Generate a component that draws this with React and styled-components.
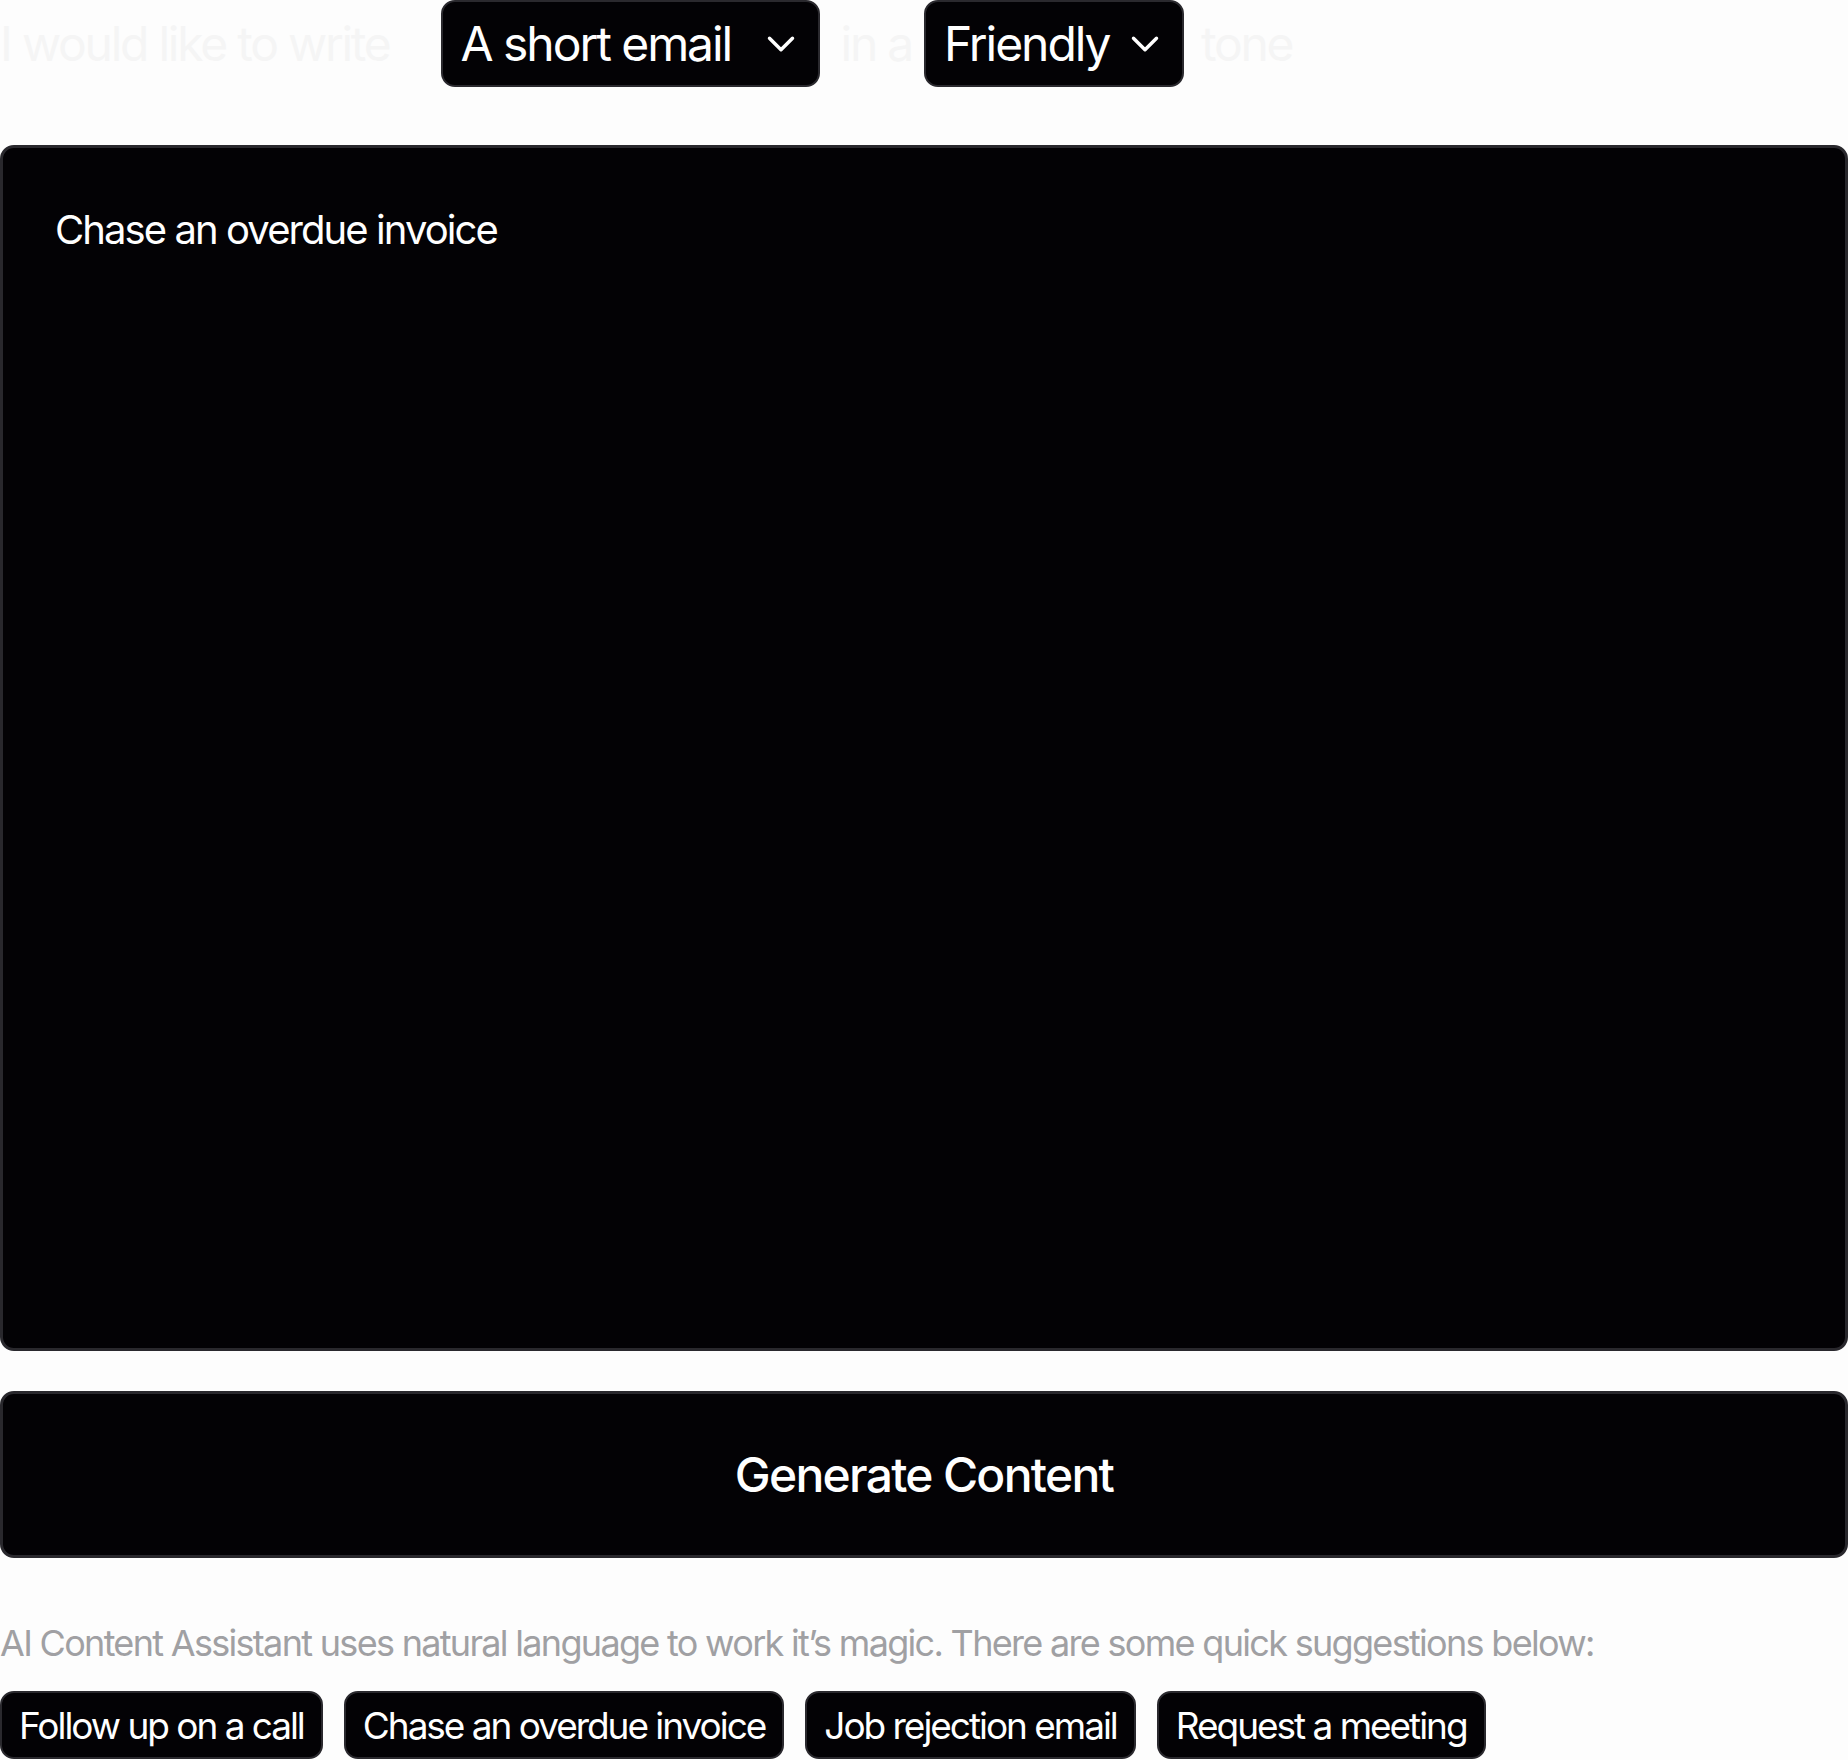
import React from "react";
import styled, { createGlobalStyle } from "styled-components";
import { ChevronDown } from "lucide-react";

const GlobalStyle = createGlobalStyle`
  html, body {
    margin: 0;
    padding: 0;
    background: #fdfdfd;
    font-family: Inter, "Liberation Sans", sans-serif;
  }
  * {
    box-sizing: border-box;
  }
`;

const Page = styled.div`
  width: 1848px;
  display: flex;
  flex-direction: column;
`;

const Sentence = styled.div`
  display: flex;
  align-items: center;
  height: 87px;
`;

const Filler = styled.span`
  font-size: 48px;
  color: #f5f5f5;
  letter-spacing: -0.047em;
  margin-right: ${(p) => p.$after || 0}px;
  margin-left: ${(p) => p.$before || 0}px;
`;

const Picker = styled.button`
  display: flex;
  align-items: center;
  justify-content: space-between;
  width: ${(p) => p.$w}px;
  height: 87px;
  padding: 0 14px 0 18px;
  background: #030205;
  border: 2px solid #2a292e;
  border-radius: 14px;
  color: #fff;
  font-family: inherit;
  font-size: 48px;
  letter-spacing: -0.043em;
  cursor: pointer;

  svg {
    flex-shrink: 0;
  }
`;

const Prompt = styled.textarea`
  margin-top: 58px;
  width: 100%;
  height: 1206px;
  resize: none;
  padding: 52px 52px;
  background: #030205;
  border: 3px solid #29282d;
  border-radius: 14px;
  color: #fff;
  font-family: inherit;
  font-size: 40px;
  line-height: 1.5;
  letter-spacing: -0.048em;
  outline: none;
`;

const Generate = styled.button`
  margin-top: 40px;
  width: 100%;
  height: 167px;
  background: #030205;
  border: 3px solid #29282d;
  border-radius: 14px;
  color: #fff;
  font-family: inherit;
  font-size: 48px;
  font-weight: 500;
  letter-spacing: -0.036em;
  cursor: pointer;
`;

const Hint = styled.p`
  margin: 60px 0 0;
  font-size: 36px;
  line-height: 1.4;
  color: #a0a0a3;
  letter-spacing: -0.047em;
`;

const Chips = styled.div`
  display: flex;
  gap: 21px;
  margin-top: 23px;
`;

const Chip = styled.button`
  height: 68px;
  padding: 0 17px;
  background: #030205;
  border: 2px solid #2a292e;
  border-radius: 14px;
  color: #fff;
  font-family: inherit;
  font-size: 37px;
  letter-spacing: -0.055em;
  cursor: pointer;
`;

const suggestions = [
  "Follow up on a call",
  "Chase an overdue invoice",
  "Job rejection email",
  "Request a meeting",
];

export default function App() {
  return (
    <>
      <GlobalStyle />
      <Page>
        <Sentence>
          <Filler $after={51}>I would like to write</Filler>
          <Picker $w={379}>
            <span>A short email</span>
            <ChevronDown size={46} strokeWidth={1.8} />
          </Picker>
          <Filler $before={21} $after={12}>in a</Filler>
          <Picker $w={260}>
            <span>Friendly</span>
            <ChevronDown size={46} strokeWidth={1.8} />
          </Picker>
          <Filler $before={17}>tone</Filler>
        </Sentence>
        <Prompt defaultValue="Chase an overdue invoice" />
        <Generate>Generate Content</Generate>
        <Hint>
          AI Content Assistant uses natural language to work it’s magic. There are some quick suggestions below:
        </Hint>
        <Chips>
          {suggestions.map((s) => (
            <Chip key={s}>{s}</Chip>
          ))}
        </Chips>
      </Page>
    </>
  );
}
